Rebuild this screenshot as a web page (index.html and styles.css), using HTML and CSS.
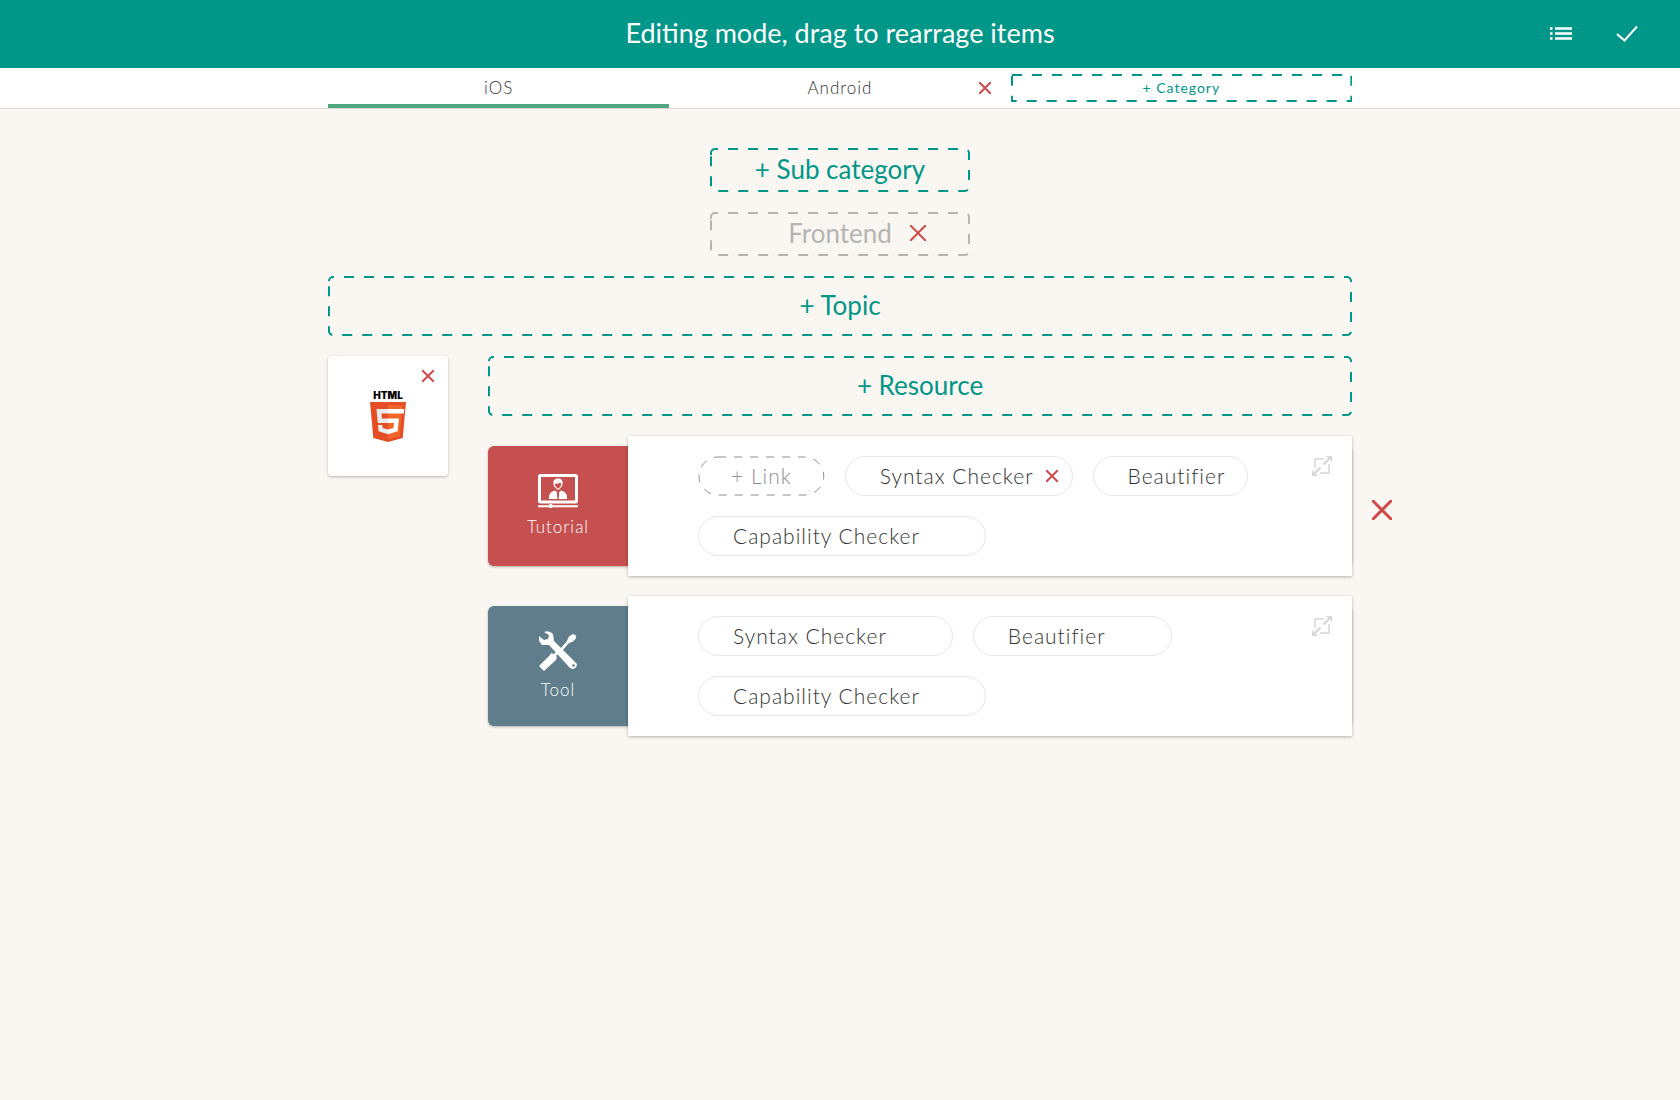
FILE: index.html
```html
<!DOCTYPE html>
<html lang="en">
<head>
<meta charset="utf-8">
<meta name="viewport" content="width=device-width, initial-scale=1">
<title>Editing mode</title>
<link rel="stylesheet" href="styles.css">
</head>
<body>
<svg class="sprite" aria-hidden="true">
  <symbol id="cross" viewBox="0 0 20 20"><path d="M1 1L19 19M19 1L1 19" fill="none" stroke="currentColor" stroke-linecap="round" vector-effect="non-scaling-stroke"/></symbol>
  <symbol id="expand" viewBox="0 0 20 20">
    <path d="M12 3H3V12M17 8V17H8" fill="none" stroke="currentColor" stroke-width="1.400" />
    <path d="M3 17L8.500 11.500M11.500 8.500L17 3" fill="none" stroke="currentColor" stroke-width="2.400"/>
    <path d="M14 0H20V6ZM0 14V20H6Z" fill="currentColor"/>
  </symbol>
</svg>

<header class="topbar">
  <h1 class="title">Editing mode, drag to rearrage items</h1>
  <div class="actions">
    <button class="icon-button" type="button" aria-label="List view">
      <svg width="22" height="14" viewBox="0 0 22 14"><path d="M0 1.500H2.500M5 1.500H22M0 6.500H2.500M5 6.500H22M0 11.500H2.500M5 11.500H22" stroke="currentColor" stroke-width="2.400"/></svg>
    </button>
    <button class="icon-button" type="button" aria-label="Finish editing">
      <svg width="22" height="18" viewBox="0 0 22 18"><path d="M1 9L8.500 15.500L21 1.500" fill="none" stroke="currentColor" stroke-width="2"/></svg>
    </button>
  </div>
</header>

<nav class="tabs">
  <ul class="tab-list">
    <li class="tab tab-active"><a href="#ios">iOS</a></li>
    <li class="tab"><a href="#android">Android</a><button class="delete delete-small tab-delete" type="button" aria-label="Delete Android"><svg><use href="#cross"/></svg></button></li>
    <li class="tab">
      <button class="dashed add-category" type="button">
        <svg class="outline"><rect class="outline-rect"/></svg>+ Category
      </button>
    </li>
  </ul>
</nav>

<main class="content">
  <button class="dashed box add-sub" type="button">
    <svg class="outline"><rect class="outline-rect outline-round"/><path class="outline-corner" d="M1 7V5A4 4 0 0 1 5 1"/></svg>+ Sub category
  </button>
  <div class="dashed box sub-category">
    <svg class="outline"><rect class="outline-rect outline-round"/><path class="outline-corner" d="M1 7V5A4 4 0 0 1 5 1"/></svg>
    <span class="sub-name">Frontend</span>
    <button class="delete delete-medium" type="button" aria-label="Delete Frontend"><svg><use href="#cross"/></svg></button>
  </div>
  <button class="dashed wide" type="button">
    <svg class="outline"><rect class="outline-rect outline-wide"/><path class="outline-corner" d="M1 5A4 4 0 0 1 5 1H6"/></svg>+ Topic
  </button>

  <section class="topic">
    <div class="topic-card">
      <svg width="40" height="58" viewBox="0 -4 40 58" role="img" aria-label="HTML5">
        <text class="logo-word" x="20" y="8" text-anchor="middle">HTML</text>
        <path d="M2 11H38L34.700 47L20 51L5.300 47Z" fill="#e44d26"/>
        <path d="M20 14H34.700L32 45L20 48.200Z" fill="#f16529"/>
        <path d="M20 18H8.500L9.800 32H20V27.500H13.900L13.500 22.500H20ZM20 38.500L14.700 37L14.300 34H10L10.600 40.300L20 43.200Z" fill="#ebebeb"/>
        <path d="M20 18H36.200L35.800 22.500H20ZM20 27.500H31L29.600 40.300L20 43.200V38.500L25.500 37L26 32H20Z" fill="#fff"/>
      </svg>
      <button class="delete delete-small card-delete" type="button" aria-label="Delete HTML5"><svg><use href="#cross"/></svg></button>
    </div>

    <div class="resources">
      <button class="dashed wide" type="button">
        <svg class="outline"><rect class="outline-rect outline-wide"/><path class="outline-corner" d="M1 5A4 4 0 0 1 5 1H6"/></svg>+ Resource
      </button>

      <article class="resource tutorial">
        <h2 class="resource-label">
          <svg width="40" height="34" viewBox="0 0 40 34">
            <rect x="1.500" y="1.500" width="37" height="26.500" rx="1" fill="none" stroke="#fff" stroke-width="3"/>
            <path d="M11 25V22Q12 17.500 17 16.500L20 19L23 16.500Q28 17.500 29 22V25Z" fill="#fff"/>
            <path d="M20 17.500L21.200 19L20.600 25H19.400L18.800 19Z" fill="#c64f4f"/>
            <path d="M15.500 10Q14.500 4.500 20 4.500T24.500 10Q24.500 13 20 16Q15.500 13 15.500 10Z" fill="#fff"/>
            <path d="M16.700 9.500Q20 10.500 22 8.500L23.300 10Q23 13 20 14.700Q17 13 16.700 9.500Z" fill="#c64f4f"/>
            <path d="M0 32.300H40" stroke="#fff" stroke-width="2"/>
            <rect x="11" y="30" width="3.500" height="4" rx="1" fill="#fff"/>
          </svg>
          Tutorial
        </h2>
        <div class="panel">
          <ul class="links">
            <li><button class="pill dashed add-link" type="button"><svg class="outline"><rect class="outline-rect outline-pill"/></svg>+ Link</button></li>
            <li class="pill pill-editing"><a href="#syntax">Syntax Checker</a><button class="delete delete-small" type="button" aria-label="Delete Syntax Checker"><svg><use href="#cross"/></svg></button></li>
            <li class="pill pill-compact"><a href="#beautifier">Beautifier</a></li>
            <li class="pill"><a href="#capability">Capability Checker</a></li>
          </ul>
          <button class="expand" type="button" aria-label="Expand Tutorial"><svg width="20" height="20"><use href="#expand"/></svg></button>
        </div>
        <button class="delete delete-large resource-delete" type="button" aria-label="Delete Tutorial"><svg><use href="#cross"/></svg></button>
      </article>

      <article class="resource tool">
        <h2 class="resource-label">
          <svg width="38" height="40" viewBox="0 0 38 40">
            <path d="M5 1Q10 -1 14 3L15 10L38 33Q38 37 34 38L31 37L10 14H3L0 10V5L5 9L9 8L10 4Z" fill="#fff"/>
            <circle cx="34.500" cy="34.500" r="1.300" fill="#607d8b"/>
            <path d="M21 18L28 10Q29 5 34 3Q38 4 37 7Q35 11 30 12L23 20Z" fill="#fff"/>
            <path d="M0 35L11 24L12 22L15 23L18 26L17 29L5 40Z" fill="#fff"/>
            <path d="M14 24L20 18L22 20L16 26Z" fill="#fff"/>
          </svg>
          Tool
        </h2>
        <div class="panel">
          <ul class="links">
            <li class="pill"><a href="#syntax">Syntax Checker</a></li>
            <li class="pill"><a href="#beautifier">Beautifier</a></li>
            <li class="pill"><a href="#capability">Capability Checker</a></li>
          </ul>
          <button class="expand" type="button" aria-label="Expand Tool"><svg width="20" height="20"><use href="#expand"/></svg></button>
        </div>
      </article>
    </div>
  </section>
</main>
</body>
</html>
```
FILE: styles.css
```css
:root {
  --teal: #009688;
  --red: #d04a4a;
  --muted: #b4b4b4;
  --ink: #333;
  --shadow: 0 1px 3px rgba(0, 0, 0, 0.28);
}

* { box-sizing: border-box; }

body {
  margin: 0;
  min-height: 100vh;
  background: #faf7f2;
  color: var(--ink);
  font: 16px/24px Lato, "Liberation Sans", sans-serif;
}

button {
  margin: 0;
  padding: 0;
  border: 0;
  background: none;
  color: inherit;
  font: inherit;
  letter-spacing: inherit;
  cursor: pointer;
}

a { color: inherit; text-decoration: none; }
ul { margin: 0; padding: 0; list-style: none; }
svg { display: block; }
.sprite { position: absolute; width: 0; height: 0; }

/* Top bar */
.topbar {
  display: grid;
  grid-template-columns: 1fr auto 1fr;
  align-items: center;
  min-height: 68px;
  padding: 0 42px;
  background: var(--teal);
  color: #fff;
}
.title {
  grid-column: 2;
  margin: 0;
  padding-bottom: 2px;
  font-size: 27px;
  font-weight: 400;
  line-height: 32px;
}
.actions {
  display: flex;
  justify-content: flex-end;
  align-items: center;
  gap: 44px;
}

/* Category tabs */
.tabs {
  background: #fff;
  border-bottom: 1px solid #dedbd7;
  font-weight: 300;
  letter-spacing: 1px;
}
.tab-list {
  display: grid;
  grid-template-columns: repeat(3, 1fr);
  max-width: 1024px;
  margin: 0 auto;
}
.tab {
  display: grid;
  grid-template-columns: 1fr auto 1fr;
  align-items: center;
  height: 40px;
}
.tab a { grid-column: 2; font-size: 17px; }
.tab-active { border-bottom: 4px solid #4fa57f; padding-top: 4px; }
.tab-delete { justify-self: end; margin-right: 20px; }
.add-category {
  grid-column: 1 / -1;
  height: 28px;
  font-size: 14px;
  font-weight: 400;
}

/* Dashed outlines */
.dashed { position: relative; color: var(--teal); }
.outline {
  position: absolute;
  inset: 0;
  width: 100%;
  height: 100%;
  pointer-events: none;
}
.outline-rect {
  x: 1px;
  y: 1px;
  width: calc(100% - 2px);
  height: calc(100% - 2px);
  fill: none;
  stroke: currentColor;
  stroke-width: 2px;
  stroke-dasharray: 10px;
}
.outline-corner { fill: none; stroke: currentColor; stroke-width: 2px; }
.outline-round { rx: 4px; stroke-dashoffset: -13px; }
.outline-wide { rx: 4px; stroke-dashoffset: -11px; }
.outline-pill { rx: 19px; stroke-width: 1px; stroke-dasharray: 8px; }

/* Delete crosses */
.delete { color: var(--red); line-height: 0; }
.delete svg { width: 100%; height: 100%; stroke-width: 2px; }
.delete-small { width: 12px; height: 12px; }
.delete-medium { width: 16px; height: 16px; }
.delete-large { width: 20px; height: 20px; }
.delete-large svg { stroke-width: 3px; }

/* Main column */
.content {
  display: flex;
  flex-direction: column;
  align-items: center;
  gap: 20px;
  max-width: 1024px;
  margin: 0 auto;
  padding: 39px 0;
}
.box, .wide { padding-bottom: 2px; font-size: 26px; line-height: 32px; }
.box { width: 260px; height: 44px; }
.wide { width: 100%; height: 60px; }
.sub-category {
  display: grid;
  grid-template-columns: 1fr auto 1fr;
  align-items: center;
  column-gap: 18px;
  color: var(--muted);
}
.sub-name { grid-column: 2; }

.topic { display: flex; align-items: flex-start; gap: 40px; width: 100%; }
.topic-card {
  position: relative;
  display: flex;
  flex: none;
  align-items: center;
  justify-content: center;
  width: 120px;
  height: 120px;
  border-radius: 4px;
  background: #fff;
  box-shadow: var(--shadow);
}
.card-delete { position: absolute; top: 14px; right: 14px; }
.logo-word { font-family: Inter, sans-serif; font-size: 10px; font-weight: 900; fill: #000; }

.resources { display: flex; flex: 1; flex-direction: column; gap: 30px; }

/* Resource rows: the white panel is taller than the coloured card behind it */
.resource {
  position: relative;
  display: flex;
  border-radius: 6px;
  box-shadow: var(--shadow);
}
.resource + .resource { margin-top: 10px; }
.tutorial { background: #c64f4f; }
.tool { background: #607d8b; }
.resource-label {
  display: flex;
  flex: none;
  flex-direction: column;
  align-items: center;
  justify-content: center;
  gap: 8px;
  width: 140px;
  margin: 0;
  color: #fff;
  font-size: 17px;
  font-weight: 300;
  line-height: 22px;
  letter-spacing: 1px;
}
.panel {
  display: flex;
  flex: 1;
  align-items: flex-start;
  gap: 20px;
  margin: -10px 0;
  padding: 20px 20px 20px 70px;
  background: #fff;
  box-shadow: var(--shadow);
}
.links {
  display: flex;
  flex: 1;
  flex-wrap: wrap;
  gap: 20px;
  font-size: 21px;
  font-weight: 300;
  letter-spacing: 1px;
}
.pill {
  display: flex;
  align-items: center;
  height: 40px;
  padding: 0 65px 0 34px;
  border: 1px solid #e6e6e6;
  border-radius: 20px;
}
.pill-editing { gap: 12px; padding-right: 14px; }
.pill-compact { padding-right: 22px; }
.add-link { padding: 0 33px; border: 0; color: #909090; }
.expand { color: #d6d6d6; }
.resource-delete { position: absolute; top: 54px; right: -40px; }
```
